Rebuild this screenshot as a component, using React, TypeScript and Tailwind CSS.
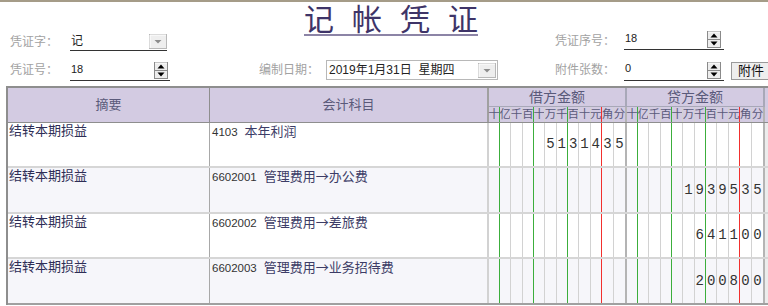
import React from "react";

const digitHeads = ["十", "亿", "千", "百", "十", "万", "千", "百", "十", "元", "角", "分"];

const rows = [
  { summary: "结转本期损益", code: "4103", name: "本年利润", debit: "5131435", credit: "" },
  { summary: "结转本期损益", code: "6602001", name: "管理费用→办公费", debit: "", credit: "1939535" },
  { summary: "结转本期损益", code: "6602002", name: "管理费用→差旅费", debit: "", credit: "641100" },
  { summary: "结转本期损益", code: "6602003", name: "管理费用→业务招待费", debit: "", credit: "200800" },
];

// separator kind after each digit column
const sepKind = ["g", "n", "n", "g", "n", "n", "g", "n", "n", "r", "n", "end"];

function Sep({ kind }: { kind: string }) {
  if (kind === "g") return <div className="w-px shrink-0 self-stretch bg-[#3cae3c]" />;
  if (kind === "r") return <div className="w-px shrink-0 self-stretch bg-[#f2302e]" />;
  if (kind === "end") return <div className="w-[2px] shrink-0 self-stretch bg-[#b4b4b4]" />;
  return <div className="w-px shrink-0 self-stretch bg-[#d2d2d2]" />;
}

function Spinner() {
  return (
    <svg width="14" height="17" viewBox="0 0 14 17">
      <rect x="0.5" y="0.5" width="13" height="16" fill="#ededed" stroke="#8a8a8a" />
      <line x1="1" y1="1" x2="13" y2="1" stroke="#ffffff" />
      <line x1="1" y1="8.5" x2="13" y2="8.5" stroke="#8a8a8a" />
      <polygon points="3.5,6.5 10.5,6.5 7,2.5" fill="#000" />
      <polygon points="3.5,10.5 10.5,10.5 7,14.5" fill="#000" />
    </svg>
  );
}

function Combo() {
  return (
    <svg width="18" height="15" viewBox="0 0 18 15">
      <rect x="0.5" y="0.5" width="17" height="14" fill="#eeeeee" stroke="#b8b8b8" />
      <line x1="1" y1="1" x2="17" y2="1" stroke="#ffffff" />
      <line x1="1" y1="1" x2="1" y2="14" stroke="#ffffff" />
      <polygon points="5.5,6 12.5,6 9,9.5" fill="#8c8c8c" />
    </svg>
  );
}

function DigitCells({ value, body }: { value: string; body: boolean }) {
  const padded = value.padStart(12, " ");
  return (
    <div className="grid grid-cols-[11px_repeat(9,11.333px)_12px_13px] h-full">
      {padded.split("").map((d, i) => (
        <div key={i} className="flex min-w-0">
          <div
            className={`flex-1 min-w-0 flex items-center justify-center ${
              body
                ? "font-['Liberation_Mono',monospace] text-[14px] text-[#333]"
                : "text-[11.5px] text-[#5a5a7a] leading-none overflow-visible whitespace-nowrap"
            }`}
          >
            {body ? (d === " " ? "" : d) : digitHeads[i]}
          </div>
          <Sep kind={sepKind[i]} />
        </div>
      ))}
    </div>
  );
}

export default function App() {
  return (
    <div className="w-[768px] h-[306px] overflow-hidden bg-white border-t-2 border-[#a59c88] font-['Liberation_Sans','Noto_Sans_CJK_SC',sans-serif]">
      {/* top fields, first line */}
      <div className="flex h-[50px]">
        <div className="w-[259px] shrink-0 pl-[10px] flex items-end pb-[1px]">
          <span className="w-[60px] text-[12px] leading-[17px] text-[#a2a2a2]">凭证字：</span>
          <div className="w-[97px] h-[17px] border-b border-[#333] flex justify-between items-start">
            <span className="text-[12px] leading-[14px] text-[#222] pl-[1px]">记</span>
            <Combo />
          </div>
        </div>
        <div className="w-[296px] shrink-0 pl-[45px] pt-[4px]">
          <div className="inline-flex gap-[18px] border-b-2 border-[#8c84a6] text-[30px] leading-[28px] text-[#3e3468]">
            <span>记</span>
            <span>帐</span>
            <span>凭</span>
            <span>证</span>
          </div>
        </div>
        <div className="flex items-end pb-[2px]">
          <span className="w-[69px] text-[12px] leading-[17px] text-[#a2a2a2]">凭证序号：</span>
          <div className="w-[100px] h-[17px] border-b border-[#333] flex justify-between items-start">
            <span className="text-[11px] leading-[11px] text-[#222] pl-[1px]">18</span>
            <div className="mr-[3px] -mt-[2px]">
              <Spinner />
            </div>
          </div>
        </div>
      </div>

      {/* top fields, second line */}
      <div className="flex h-[34px] pt-[8px] items-start">
        <div className="w-[259px] shrink-0 pl-[10px] flex items-start">
          <span className="w-[60px] text-[12px] leading-[21px] text-[#a2a2a2]">凭证号：</span>
          <div className="w-[100px] h-[21px] border-b border-[#333] flex justify-between items-start">
            <span className="text-[11px] leading-[11px] text-[#222] pl-[1px] pt-[4px]">18</span>
            <div className="mr-[2px] mt-[2px]">
              <Spinner />
            </div>
          </div>
        </div>
        <div className="w-[296px] shrink-0 flex items-start">
          <span className="w-[67px] text-[12px] leading-[20px] text-[#a2a2a2]">编制日期：</span>
          <div className="w-[172px] h-[20px] border border-[#b8b8b8] flex items-center justify-between pl-[2px] pr-[1px]">
            <span className="text-[12px] text-[#222] whitespace-pre">2019年1月31日  星期四</span>
            <Combo />
          </div>
        </div>
        <div className="flex items-start">
          <span className="w-[69px] text-[12px] leading-[21px] text-[#a2a2a2]">附件张数：</span>
          <div className="w-[100px] h-[21px] border-b border-[#333] flex justify-between items-start">
            <span className="text-[11px] leading-[11px] text-[#222] pl-[1px] pt-[3px]">0</span>
            <div className="mr-[3px] mt-[2px]">
              <Spinner />
            </div>
          </div>
          <button className="ml-[7px] mt-[2px] w-[50px] shrink-0 h-[18px] bg-[#eeeeee] border border-[#9a9a9a] text-[13px] leading-[16px] text-[#111] text-left pl-[6px] whitespace-nowrap">
            附件
          </button>
        </div>
      </div>

      {/* voucher table */}
      <div className="ml-[6px] w-[762px] border-l-2 border-t-2 border-[#8e8e8e]">
        <div className="grid grid-cols-[202px_279px_138px_138px_1fr] h-[35px] bg-[#d3cbe2] border-b border-[#8e8e8e] text-[#5a5a7a]">
          <div className="border-r border-[#8e8e8e] flex items-center justify-center text-[13px]">摘要</div>
          <div className="border-r-2 border-[#a0a0a0] flex items-center justify-center text-[13px]">会计科目</div>
          <div className="flex flex-col">
            <div className="h-[19px] border-b border-r-2 border-[#a8a8b8] flex items-center justify-center text-[14px]">借方金额</div>
            <div className="flex-1">
              <DigitCells value="" body={false} />
            </div>
          </div>
          <div className="flex flex-col">
            <div className="h-[19px] border-b border-r-2 border-[#a8a8b8] flex items-center justify-center text-[14px]">贷方金额</div>
            <div className="flex-1">
              <DigitCells value="" body={false} />
            </div>
          </div>
          <div />
        </div>

        {rows.map((r, i) => (
          <div
            key={i}
            className={`grid grid-cols-[202px_279px_138px_138px_1fr] border-b-2 ${
              i === rows.length - 1 ? "border-[#a0a0a0]" : "border-[#d6d6d6]"
            } ${i % 2 === 0 ? "bg-white h-[45px]" : "bg-[#f6f6fa] h-[46px]"}`}
          >
            <div className="border-r border-[#a8a8a8] pl-[1px] text-[13px] leading-[16px] text-[#2e2e56]">{r.summary}</div>
            <div className="border-r-2 border-[#d2d2d2] pl-[2px] flex items-baseline leading-[16px]">
              <span className="text-[11.5px] text-[#333]">{r.code}</span>
              <span className="ml-[7px] text-[13px] text-[#3c3c66] font-['Noto_Sans_CJK_SC',sans-serif]">{r.name}</span>
            </div>
            <DigitCells value={r.debit} body />
            <DigitCells value={r.credit} body />
            <div className="bg-[#ececec]" />
          </div>
        ))}
      </div>
    </div>
  );
}
